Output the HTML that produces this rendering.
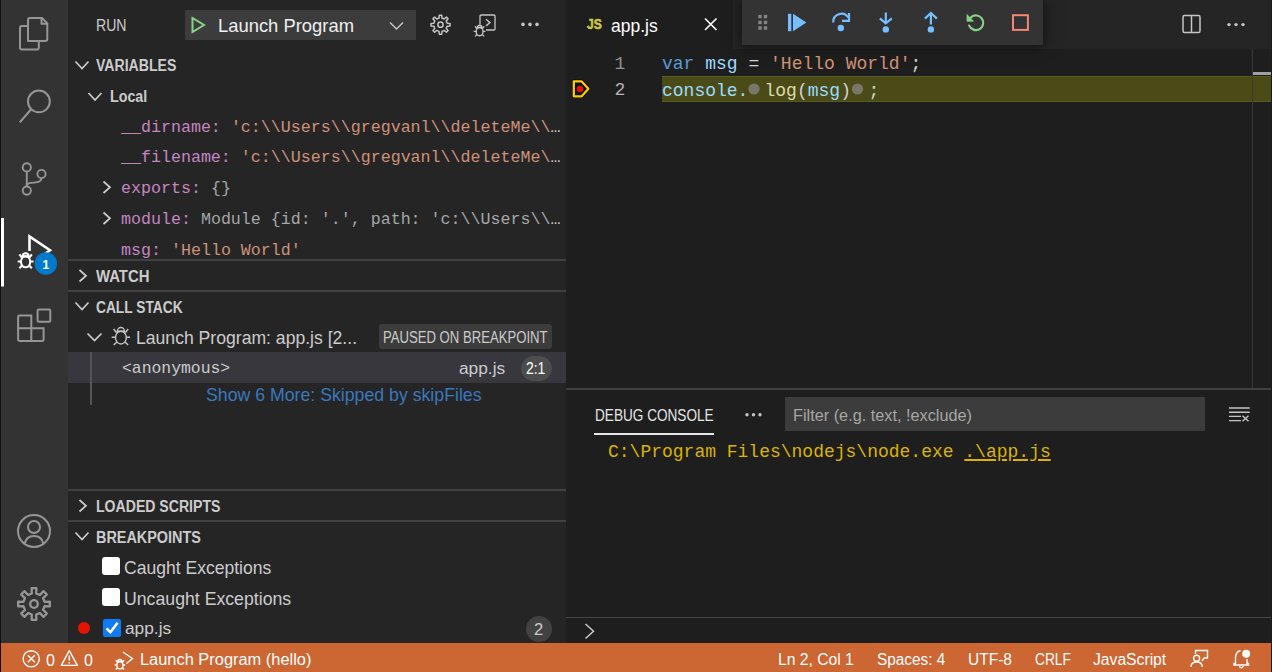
<!DOCTYPE html>
<html><head><meta charset="utf-8">
<style>
*{margin:0;padding:0;box-sizing:border-box}
html,body{width:1272px;height:672px;overflow:hidden;background:#1e1e1e}
body{position:relative;font-family:"Liberation Sans",sans-serif;color:#cccccc}
.a{position:absolute;white-space:pre;line-height:1.15}
.b{position:absolute}
</style></head><body>
<div class="b" style="left:0;top:0;width:68px;height:643px;background:#333333"></div>
<div class="b" style="left:68px;top:0;width:498px;height:643px;background:#252526"></div>
<div class="b" style="left:566px;top:0;width:706px;height:49px;background:#252526"></div>
<div class="b" style="left:566px;top:0;width:167px;height:49px;background:#1e1e1e"></div>
<div class="b" style="left:661.5px;top:76px;width:610.5px;height:26px;background:#4b4b18;border-top:1px solid #595922;border-bottom:1px solid #595922"></div>
<div class="b" style="left:1252px;top:49px;width:1px;height:339px;background:#3a3a3a"></div>
<div class="b" style="left:1253px;top:72px;width:19px;height:3px;background:#a0a0a0"></div>
<div class="b" style="left:185px;top:10px;width:231px;height:30px;background:#3c3c3c"></div>
<div class="b" style="left:68px;top:259px;width:498px;height:2px;background:#414142"></div>
<div class="b" style="left:68px;top:290px;width:498px;height:2px;background:#414142"></div>
<div class="b" style="left:379px;top:324px;width:173px;height:25px;background:#3c3c3c;border-radius:3px"></div>
<div class="b" style="left:68px;top:352px;width:498px;height:31px;background:#37373d"></div>
<div class="b" style="left:521px;top:356px;width:31px;height:25px;background:#4d4d4d;border-radius:13px"></div>
<div class="b" style="left:90px;top:352px;width:2px;height:53px;background:#555555"></div>
<div class="b" style="left:68px;top:489px;width:498px;height:2px;background:#414142"></div>
<div class="b" style="left:68px;top:520px;width:498px;height:2px;background:#414142"></div>
<div class="b" style="left:102px;top:557px;width:18px;height:18px;background:#fff;border-radius:3px"></div>
<div class="b" style="left:102px;top:588px;width:18px;height:18px;background:#fff;border-radius:3px"></div>
<div class="b" style="left:78px;top:622px;width:12px;height:12px;background:#e51400;border-radius:50%"></div>
<div class="b" style="left:103px;top:619px;width:18px;height:18px;background:#0f7af5;border-radius:2px"></div>
<div class="b" style="left:526px;top:616px;width:26px;height:26px;background:#424242;border-radius:50%"></div>
<div class="b" style="left:566px;top:388px;width:706px;height:2px;background:#404040"></div>
<div class="b" style="left:594px;top:433px;width:120px;height:2px;background:#e7e7e7"></div>
<div class="b" style="left:785px;top:397px;width:420px;height:34px;background:#3c3c3c"></div>
<div class="b" style="left:566px;top:617px;width:706px;height:1px;background:#444"></div>
<div class="b" style="left:0;top:643px;width:1272px;height:29px;background:#cc6633"></div>
<div class="b" style="left:742px;top:0;width:301px;height:44.5px;background:#333333;box-shadow:0 0 14px 1px rgba(0,0,0,0.55)"></div>
<div class="b" style="left:0;top:0;width:1px;height:672px;background:#111111"></div>
<div class="b" style="left:1271px;top:0;width:1px;height:672px;background:#1b1b1b"></div>
<div class="a" style="left:96px;top:17px;font-size:16px;color:#cccccc;font-family:'Liberation Sans',sans-serif;font-weight:normal;transform:scaleX(0.88);transform-origin:0 0;">RUN</div><div class="a" style="left:218px;top:15px;font-size:18.4px;color:#f0f0f0;font-family:'Liberation Sans',sans-serif;font-weight:normal;">Launch Program</div><div class="a" style="left:96px;top:57px;font-size:16px;color:#cccccc;font-family:'Liberation Sans',sans-serif;font-weight:bold;transform:scaleX(0.88);transform-origin:0 0;">VARIABLES</div><div class="a" style="left:110px;top:88px;font-size:16px;color:#cccccc;font-family:'Liberation Sans',sans-serif;font-weight:bold;transform:scaleX(0.89);transform-origin:0 0;">Local</div><div class="a" style="left:121px;top:117.5px;font-size:16.65px;color:#ccc;font-family:'Liberation Mono',monospace;font-weight:normal;"><span style="color:#c586c0">__dirname:</span> <span style="color:#ce9178">'c:\\Users\\gregvanl\\deleteMe\\</span>…</div><div class="a" style="left:121px;top:148.3px;font-size:16.65px;color:#ccc;font-family:'Liberation Mono',monospace;font-weight:normal;"><span style="color:#c586c0">__filename:</span> <span style="color:#ce9178">'c:\\Users\\gregvanl\\deleteMe\</span>…</div><div class="a" style="left:121px;top:179.1px;font-size:16.65px;color:#ccc;font-family:'Liberation Mono',monospace;font-weight:normal;"><span style="color:#c586c0">exports:</span> <span style="color:#a6a6a6">{}</span></div><div class="a" style="left:121px;top:209.9px;font-size:16.65px;color:#ccc;font-family:'Liberation Mono',monospace;font-weight:normal;"><span style="color:#c586c0">module:</span> <span style="color:#a6a6a6">Module {id: '.', path: 'c:\\Users\\</span>…</div><div class="a" style="left:121px;top:240.7px;font-size:16.65px;color:#ccc;font-family:'Liberation Mono',monospace;font-weight:normal;"><span style="color:#c586c0">msg:</span> <span style="color:#ce9178">'Hello World'</span></div><div class="a" style="left:96px;top:268px;font-size:16px;color:#cccccc;font-family:'Liberation Sans',sans-serif;font-weight:bold;transform:scaleX(0.93);transform-origin:0 0;">WATCH</div><div class="a" style="left:96px;top:299px;font-size:16px;color:#cccccc;font-family:'Liberation Sans',sans-serif;font-weight:bold;transform:scaleX(0.86);transform-origin:0 0;">CALL STACK</div><div class="a" style="left:136px;top:328px;font-size:17.6px;color:#cccccc;font-family:'Liberation Sans',sans-serif;font-weight:normal;">Launch Program: app.js [2...</div><div class="a" style="left:383px;top:328.5px;font-size:16px;color:#cccccc;font-family:'Liberation Sans',sans-serif;font-weight:normal;transform:scaleX(0.82);transform-origin:0 0;">PAUSED ON BREAKPOINT</div><div class="a" style="left:122px;top:359.5px;font-size:16.4px;color:#cccccc;font-family:'Liberation Mono',monospace;font-weight:normal;">&lt;anonymous&gt;</div><div class="a" style="left:459px;top:359px;font-size:17.3px;color:#cccccc;font-family:'Liberation Sans',sans-serif;font-weight:normal;">app.js</div><div class="a" style="left:526px;top:359px;font-size:16.2px;color:#ffffff;font-family:'Liberation Sans',sans-serif;font-weight:normal;transform:scaleX(0.86);transform-origin:0 0;">2:1</div><div class="a" style="left:206px;top:384px;font-size:18.5px;color:#3a78bd;font-family:'Liberation Sans',sans-serif;font-weight:normal;transform:scaleX(0.957);transform-origin:0 0;">Show 6 More: Skipped by skipFiles</div><div class="a" style="left:96px;top:498px;font-size:16px;color:#cccccc;font-family:'Liberation Sans',sans-serif;font-weight:bold;transform:scaleX(0.88);transform-origin:0 0;">LOADED SCRIPTS</div><div class="a" style="left:96px;top:529px;font-size:16px;color:#cccccc;font-family:'Liberation Sans',sans-serif;font-weight:bold;transform:scaleX(0.9);transform-origin:0 0;">BREAKPOINTS</div><div class="a" style="left:124px;top:558px;font-size:17.56px;color:#cccccc;font-family:'Liberation Sans',sans-serif;font-weight:normal;">Caught Exceptions</div><div class="a" style="left:124px;top:589px;font-size:17.7px;color:#cccccc;font-family:'Liberation Sans',sans-serif;font-weight:normal;">Uncaught Exceptions</div><div class="a" style="left:125px;top:619px;font-size:17.3px;color:#cccccc;font-family:'Liberation Sans',sans-serif;font-weight:normal;">app.js</div><div class="a" style="left:534px;top:620px;font-size:16.5px;color:#cccccc;font-family:'Liberation Sans',sans-serif;font-weight:normal;">2</div><div class="a" style="left:586.5px;top:14.5px;font-size:15px;color:#cbcb41;font-family:'Liberation Sans',sans-serif;font-weight:bold;transform:scaleX(0.8);transform-origin:0 0;-webkit-text-stroke:0.6px #cbcb41;">JS</div><div class="a" style="left:611px;top:16px;font-size:17.5px;color:#ffffff;font-family:'Liberation Sans',sans-serif;font-weight:normal;">app.js</div><div class="a" style="left:614.5px;top:53.7px;font-size:18px;color:#919191;font-family:'Liberation Mono',monospace;font-weight:normal;">1</div><div class="a" style="left:614.5px;top:80px;font-size:18px;color:#b4b4b4;font-family:'Liberation Mono',monospace;font-weight:normal;">2</div><div class="a" style="left:662px;top:54px;font-size:18px;color:#d4d4d4;font-family:'Liberation Mono',monospace;font-weight:normal;"><span style="color:#569cd6">var</span> <span style="color:#9cdcfe">msg</span> = <span style="color:#ce9178">'Hello World'</span>;</div><div class="a" style="left:662px;top:81px;font-size:18px;color:#9cdcfe;font-family:'Liberation Mono',monospace;font-weight:normal;">console.</div><div class="a" style="left:764.5px;top:81px;font-size:18px;color:#d4d4d4;font-family:'Liberation Mono',monospace;font-weight:normal;"><span style="color:#dcdcaa">log</span>(<span style="color:#9cdcfe">msg</span>)</div><div class="a" style="left:868.5px;top:81px;font-size:18px;color:#d4d4d4;font-family:'Liberation Mono',monospace;font-weight:normal;">;</div><div class="a" style="left:595px;top:405.5px;font-size:16.2px;color:#e7e7e7;font-family:'Liberation Sans',sans-serif;font-weight:normal;transform:scaleX(0.84);transform-origin:0 0;">DEBUG CONSOLE</div><div class="a" style="left:793px;top:406px;font-size:17px;color:#a6a6a6;font-family:'Liberation Sans',sans-serif;font-weight:normal;transform:scaleX(0.957);transform-origin:0 0;">Filter (e.g. text, !exclude)</div><div class="a" style="left:608px;top:442.3px;font-size:19px;color:#dbb300;font-family:'Liberation Mono',monospace;font-weight:normal;transform:scaleX(0.947);transform-origin:0 0;">C:\Program Files\nodejs\node.exe <span style="text-decoration:underline;text-decoration-thickness:1.5px;text-underline-offset:1.5px">.\app.js</span></div><div class="a" style="left:46px;top:652.3px;font-size:16px;color:#fff;font-family:'Liberation Sans',sans-serif;font-weight:normal;">0</div><div class="a" style="left:84px;top:652.3px;font-size:16px;color:#fff;font-family:'Liberation Sans',sans-serif;font-weight:normal;">0</div><div class="a" style="left:140px;top:651.3px;font-size:16px;color:#fff;font-family:'Liberation Sans',sans-serif;font-weight:normal;transform:scaleX(1.025);transform-origin:0 0;">Launch Program (hello)</div><div class="a" style="left:778px;top:651.3px;font-size:16px;color:#fff;font-family:'Liberation Sans',sans-serif;font-weight:normal;transform:scaleX(0.98);transform-origin:0 0;">Ln 2, Col 1</div><div class="a" style="left:877px;top:651.3px;font-size:16px;color:#fff;font-family:'Liberation Sans',sans-serif;font-weight:normal;transform:scaleX(0.96);transform-origin:0 0;">Spaces: 4</div><div class="a" style="left:968px;top:651.3px;font-size:16px;color:#fff;font-family:'Liberation Sans',sans-serif;font-weight:normal;transform:scaleX(0.97);transform-origin:0 0;">UTF-8</div><div class="a" style="left:1035px;top:651.3px;font-size:16px;color:#fff;font-family:'Liberation Sans',sans-serif;font-weight:normal;transform:scaleX(0.86);transform-origin:0 0;">CRLF</div><div class="a" style="left:1093px;top:651.3px;font-size:16px;color:#fff;font-family:'Liberation Sans',sans-serif;font-weight:normal;transform:scaleX(0.98);transform-origin:0 0;">JavaScript</div>
<svg width="1272" height="672" viewBox="0 0 1272 672" style="position:absolute;left:0;top:0"><path d="M28,41 V20 a2,2 0 0 1 2,-2 H42 L47.3,23.4 V39 a2,2 0 0 1 -2,2 Z M41.5,18 V23.8 H47.3" fill="none" stroke="#969696" stroke-width="2" stroke-linejoin="round"/><path d="M28,26 H22 a2,2 0 0 0 -2,2 V47.5 a2,2 0 0 0 2,2 H36.8 a2,2 0 0 0 2,-2 V41" fill="none" stroke="#969696" stroke-width="2"/><circle cx="38.9" cy="101.4" r="10.9" fill="none" stroke="#969696" stroke-width="2"/><path d="M31.2,109.2 L19.8,122.4" stroke="#969696" stroke-width="2.2" fill="none"/><circle cx="26.8" cy="167.4" r="4.1" fill="none" stroke="#969696" stroke-width="1.9"/><circle cx="41.5" cy="174" r="4.1" fill="none" stroke="#969696" stroke-width="1.9"/><circle cx="26.8" cy="190.6" r="4.1" fill="none" stroke="#969696" stroke-width="1.9"/><path d="M26.8,171.5 V186.5 M41.5,178.1 C41.5,182 38,182.6 34,182.6 C30,182.6 26.8,183.5 26.8,186" fill="none" stroke="#969696" stroke-width="1.9"/><rect x="1" y="218" width="3" height="68.5" fill="#ffffff"/><path d="M29.5,251 V236.5 L50,250.2 L44,254.5" fill="none" stroke="#ffffff" stroke-width="2.6" stroke-linejoin="miter"/><path d="M22.49,256.30 A3.11,3.11 0 0 1 28.71,256.30 Z" fill="none" stroke="#ffffff" stroke-width="2.1"/><ellipse cx="25.60" cy="261.85" rx="4.62" ry="5.46" fill="none" stroke="#ffffff" stroke-width="2.1"/><path d="M19.38,254.46 L21.90,257.65 M31.82,254.46 L29.30,257.65 M17.70,261.51 L20.90,261.51 M33.50,261.51 L30.30,261.51 M19.38,268.23 L22.07,265.54 M31.82,268.23 L29.13,265.54" fill="none" stroke="#ffffff" stroke-width="2.1"/><circle cx="45.8" cy="263.5" r="11.2" fill="#007acc"/><text x="45.8" y="268.5" text-anchor="middle" font-family="Liberation Sans" font-weight="bold" font-size="13" fill="#fff">1</text><rect x="37.6" y="309.4" width="12.7" height="12.3" rx="1.5" fill="none" stroke="#969696" stroke-width="2"/><path d="M18.1,317 a1.4,1.4 0 0 1 1.4,-1.4 H31.3 V328.3 H43.6 V339.5 a1.4,1.4 0 0 1 -1.4,1.4 H19.5 a1.4,1.4 0 0 1 -1.4,-1.4 Z M18.1,328.3 H31.3 V340.9" fill="none" stroke="#969696" stroke-width="2"/><circle cx="34" cy="531" r="16" fill="none" stroke="#969696" stroke-width="2"/><circle cx="34" cy="527" r="6" fill="none" stroke="#969696" stroke-width="2"/><path d="M24.5,544.5 C25.5,538.5 29.5,536 34,536 C38.5,536 42.5,538.5 43.5,544.5" fill="none" stroke="#969696" stroke-width="2"/><path d="M31.81,593.42 L31.62,588.18 L36.38,588.18 L36.19,593.42 L39.93,594.97 L43.51,591.13 L46.87,594.49 L43.03,598.07 L44.58,601.81 L49.82,601.62 L49.82,606.38 L44.58,606.19 L43.03,609.93 L46.87,613.51 L43.51,616.87 L39.93,613.03 L36.19,614.58 L36.38,619.82 L31.62,619.82 L31.81,614.58 L28.07,613.03 L24.49,616.87 L21.13,613.51 L24.97,609.93 L23.42,606.19 L18.18,606.38 L18.18,601.62 L23.42,601.81 L24.97,598.07 L21.13,594.49 L24.49,591.13 L28.07,594.97 Z" fill="none" stroke="#969696" stroke-width="2.3" stroke-linejoin="round"/><circle cx="34" cy="604" r="3.8" fill="none" stroke="#969696" stroke-width="2.3"/><path d="M192.5,18 V32 L204,25 Z" fill="none" stroke="#89d185" stroke-width="2" stroke-linejoin="miter"/><path d="M390,22.5 L396.5,29 L403,22.5" fill="none" stroke="#c5c5c5" stroke-width="1.5"/><path d="M439.04,18.06 L439.30,15.18 L441.70,15.18 L441.96,18.06 L444.17,18.97 L446.38,17.11 L448.09,18.82 L446.23,21.03 L447.14,23.24 L450.02,23.50 L450.02,25.90 L447.14,26.16 L446.23,28.37 L448.09,30.58 L446.38,32.29 L444.17,30.43 L441.96,31.34 L441.70,34.22 L439.30,34.22 L439.04,31.34 L436.83,30.43 L434.62,32.29 L432.91,30.58 L434.77,28.37 L433.86,26.16 L430.98,25.90 L430.98,23.50 L433.86,23.24 L434.77,21.03 L432.91,18.82 L434.62,17.11 L436.83,18.97 Z" fill="none" stroke="#c5c5c5" stroke-width="1.5" stroke-linejoin="round"/><circle cx="440.5" cy="24.7" r="2.6" fill="none" stroke="#c5c5c5" stroke-width="1.5"/><path d="M480,24.5 V16 a1,1 0 0 1 1,-1 H494 a1,1 0 0 1 1,1 V29 a1,1 0 0 1 -1,1 H486" fill="none" stroke="#c5c5c5" stroke-width="1.3"/><path d="M486,19.3 L490,22.6 L486,25.9" fill="none" stroke="#c5c5c5" stroke-width="1.4"/><path d="M477.31,27.57 A2.29,2.29 0 0 1 481.89,27.57 Z" fill="none" stroke="#c5c5c5" stroke-width="1.4"/><ellipse cx="479.60" cy="31.66" rx="3.41" ry="4.03" fill="none" stroke="#c5c5c5" stroke-width="1.4"/><path d="M475.01,26.21 L476.87,28.56 M484.19,26.21 L482.33,28.56 M473.77,31.42 L476.13,31.42 M485.43,31.42 L483.07,31.42 M475.01,36.38 L477.00,34.39 M484.19,36.38 L482.20,34.39" fill="none" stroke="#c5c5c5" stroke-width="1.4"/><circle cx="523" cy="24.4" r="1.8" fill="#c5c5c5"/><circle cx="530" cy="24.4" r="1.8" fill="#c5c5c5"/><circle cx="537" cy="24.4" r="1.8" fill="#c5c5c5"/><path d="M75.5,61.5 L82.0,68.5 L88.5,61.5" fill="none" stroke="#cccccc" stroke-width="1.7"/><path d="M88.5,93 L95.0,100 L101.5,93" fill="none" stroke="#cccccc" stroke-width="1.7"/><path d="M103.5,181.5 L110,187.25 L103.5,193" fill="none" stroke="#cccccc" stroke-width="1.7"/><path d="M103.5,212.5 L110,218.25 L103.5,224" fill="none" stroke="#cccccc" stroke-width="1.7"/><path d="M79.5,270 L86,275.75 L79.5,281.5" fill="none" stroke="#cccccc" stroke-width="1.7"/><path d="M75.5,302.5 L82.0,309.5 L88.5,302.5" fill="none" stroke="#cccccc" stroke-width="1.7"/><path d="M87.5,333.5 L94.5,340.5 L101.5,333.5" fill="none" stroke="#cccccc" stroke-width="1.7"/><path d="M117.27,331.19 A3.63,3.63 0 0 1 124.53,331.19 Z" fill="none" stroke="#c5c5c5" stroke-width="1.4"/><ellipse cx="120.90" cy="337.66" rx="5.39" ry="6.37" fill="none" stroke="#c5c5c5" stroke-width="1.4"/><path d="M113.65,329.03 L116.59,332.76 M128.15,329.03 L125.21,332.76 M111.69,337.26 L115.41,337.26 M130.11,337.26 L126.39,337.26 M113.65,345.10 L116.78,341.97 M128.15,345.10 L125.02,341.97" fill="none" stroke="#c5c5c5" stroke-width="1.4"/><path d="M79.5,500 L86,505.75 L79.5,511.5" fill="none" stroke="#cccccc" stroke-width="1.7"/><path d="M75.5,532.5 L82.0,539.5 L88.5,532.5" fill="none" stroke="#cccccc" stroke-width="1.7"/><path d="M106.5,628.3 L110.4,632.2 L117.6,622.8" fill="none" stroke="#ffffff" stroke-width="2.6"/><path d="M705,18.5 L716.5,30 M716.5,18.5 L705,30" stroke="#ffffff" stroke-width="1.6"/><rect x="1183" y="15.5" width="17" height="17" rx="1.5" fill="none" stroke="#c5c5c5" stroke-width="1.5"/><path d="M1191.5,15.5 V32.5" stroke="#c5c5c5" stroke-width="1.5"/><circle cx="1229" cy="24.6" r="1.7" fill="#c5c5c5"/><circle cx="1236" cy="24.6" r="1.7" fill="#c5c5c5"/><circle cx="1243" cy="24.6" r="1.7" fill="#c5c5c5"/><path d="M573.8,81.4 H581.7 L588.4,88.8 L581.7,96.3 H573.8 Z" fill="#141414" stroke="#000" stroke-width="3.6" stroke-linejoin="round"/><path d="M573.8,81.4 H581.7 L588.4,88.8 L581.7,96.3 H573.8 Z" fill="none" stroke="#ffcc00" stroke-width="2.3" stroke-linejoin="round"/><circle cx="580" cy="89" r="3.2" fill="#e51400"/><circle cx="754" cy="89" r="5.6" fill="#79776a"/><circle cx="857.5" cy="89" r="5.6" fill="#79776a"/><rect x="742" y="0" width="301" height="44.5" fill="#333333"/><rect x="758.3" y="14.900000000000002" width="3.4" height="3.4" fill="#858585"/><rect x="758.3" y="20.7" width="3.4" height="3.4" fill="#858585"/><rect x="758.3" y="26.3" width="3.4" height="3.4" fill="#858585"/><rect x="763.8" y="14.900000000000002" width="3.4" height="3.4" fill="#858585"/><rect x="763.8" y="20.7" width="3.4" height="3.4" fill="#858585"/><rect x="763.8" y="26.3" width="3.4" height="3.4" fill="#858585"/><rect x="788" y="13.8" width="3.3" height="17.4" fill="#75beff"/><path d="M793,13.8 L806.4,22.5 L793,31.2 Z" fill="#75beff"/><path d="M833.2,22.5 A8.2,8.2 0 0 1 848.2,17.5" fill="none" stroke="#75beff" stroke-width="2.2"/><path d="M849,13 V20.9 H842" fill="none" stroke="#75beff" stroke-width="2.2"/><circle cx="840.8" cy="28" r="3.2" fill="#75beff"/><path d="M885.8,12.5 V22.5 M879.8,18.3 L885.8,23.3 L891.8,18.3" fill="none" stroke="#75beff" stroke-width="2.2"/><circle cx="885.8" cy="29.4" r="3.2" fill="#75beff"/><path d="M930.9,24.5 V13.5 M924.9,18.6 L930.9,12.9 L936.9,18.6" fill="none" stroke="#75beff" stroke-width="2.2"/><circle cx="930.9" cy="29.4" r="3.2" fill="#75beff"/><path d="M969.2,25.6 A7.3,7.3 0 1 0 971.2,17.2 L969.5,18.8" fill="none" stroke="#89d185" stroke-width="2.2" stroke-linecap="round"/><path d="M967,14.6 V21.2 H973.4 Z" fill="#89d185" stroke="#89d185" stroke-width="0.8" stroke-linejoin="round"/><rect x="1013" y="15.2" width="14.9" height="14.7" fill="none" stroke="#f48771" stroke-width="2"/><circle cx="747" cy="414.7" r="1.7" fill="#c5c5c5"/><circle cx="753.5" cy="414.7" r="1.7" fill="#c5c5c5"/><circle cx="760" cy="414.7" r="1.7" fill="#c5c5c5"/><path d="M1229,408 H1249.7 M1229,412.2 H1249.7 M1229,416.4 H1241 M1229,420.6 H1241 M1242.5,415.7 L1248.5,421.2 M1248.5,415.7 L1242.5,421.2" fill="none" stroke="#c5c5c5" stroke-width="1.4"/><path d="M585.5,624 L593.5,631.25 L585.5,638.5" fill="none" stroke="#c5c5c5" stroke-width="1.6"/><circle cx="31.2" cy="658.8" r="8.1" fill="none" stroke="#ffffff" stroke-width="1.4"/><path d="M27.8,655.2 L34.8,662.2 M34.8,655.2 L27.8,662.2" stroke="#ffffff" stroke-width="1.4"/><path d="M69.3,650.6 L77.3,665.4 H61.3 Z" fill="none" stroke="#ffffff" stroke-width="1.4" stroke-linejoin="round"/><path d="M69.3,655.5 V660.5 M69.3,662 V663.5" stroke="#ffffff" stroke-width="1.5"/><path d="M122.8,652 L132.5,658.5 L126.5,663.5" fill="none" stroke="#ffffff" stroke-width="1.4"/><path d="M117.83,661.54 A2.07,2.07 0 0 1 121.97,661.54 Z" fill="none" stroke="#ffffff" stroke-width="1.4"/><ellipse cx="119.90" cy="665.23" rx="3.08" ry="3.64" fill="none" stroke="#ffffff" stroke-width="1.4"/><path d="M115.76,660.30 L117.44,662.43 M124.04,660.30 L122.36,662.43 M114.64,665.01 L116.76,665.01 M125.16,665.01 L123.04,665.01 M115.76,669.49 L117.55,667.70 M124.04,669.49 L122.25,667.70" fill="none" stroke="#ffffff" stroke-width="1.4"/><path d="M1195.5,654 V650.5 H1207.5 V658 H1204 L1202,661" fill="none" stroke="#ffffff" stroke-width="1.4"/><circle cx="1196.6" cy="658.3" r="3" fill="none" stroke="#ffffff" stroke-width="1.4"/><path d="M1190.8,666.8 C1191.2,663.5 1193.5,662 1196.6,662 C1199.7,662 1202,663.5 1202.4,666.8" fill="none" stroke="#ffffff" stroke-width="1.4"/><path d="M1240.5,650.5 C1237,651.5 1235.5,654 1235.5,658 V663.5 H1234 V665 H1248.5 V663.5 H1247 V659" fill="none" stroke="#ffffff" stroke-width="1.4"/><path d="M1239.5,666 a1.8,1.8 0 0 0 3.6,0" fill="none" stroke="#ffffff" stroke-width="1.3"/><circle cx="1246.2" cy="653.7" r="4" fill="#ffffff"/></svg>
</body></html>
